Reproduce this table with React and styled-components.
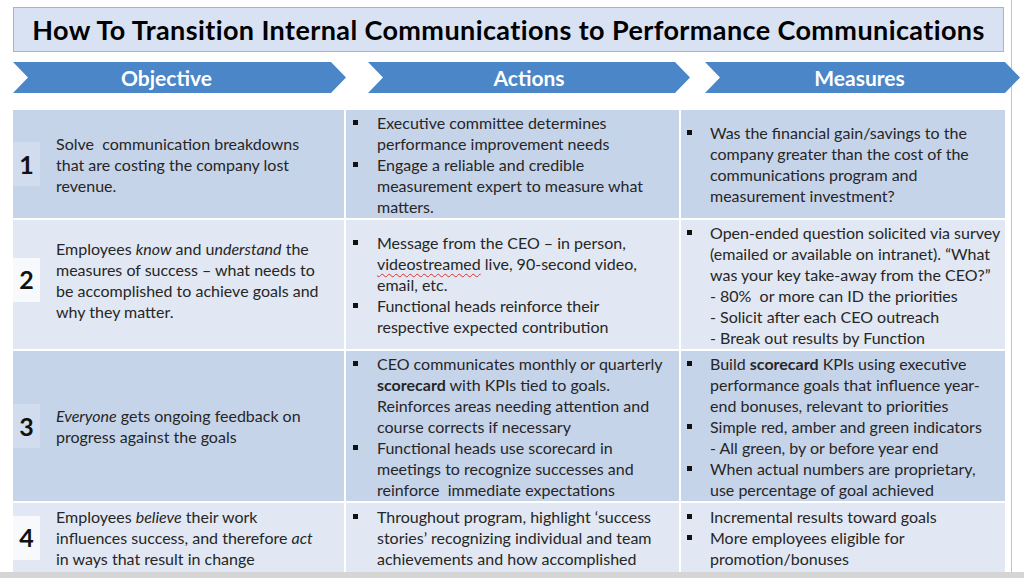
import React from 'react'
import styled, { createGlobalStyle } from 'styled-components'

const GlobalStyle = createGlobalStyle`
  html, body {
    margin: 0;
    padding: 0;
    background: #fff;
  }
  body {
    font-family: Lato, 'Open Sans', sans-serif;
    color: #262626;
  }
`

const Page = styled.div`
  width: 1024px;
  height: 578px;
  box-sizing: border-box;
  border-bottom: 6px solid #d5d5d5;
  overflow: hidden;
`

const Slide = styled.div`
  width: 1012px;
  height: 100%;
  box-sizing: border-box;
  border-right: 1px solid #c4c4c4;
  padding: 7px 0 0 13px;
`

const TitleBox = styled.div`
  width: 991px;
  height: 45px;
  box-sizing: border-box;
  background: #d9e2f3;
  border: 1px solid #9fb4d8;
  display: flex;
  align-items: center;
  justify-content: center;
  h1 {
    margin: 0;
    font-size: 27px;
    font-weight: 700;
    color: #000;
    letter-spacing: 0.4px;
    white-space: nowrap;
  }
`

const ChevronRow = styled.div`
  display: flex;
  margin-top: 10px;
  height: 31px;
`

const Chevron = styled.div`
  flex: 0 0 ${p => p.width}px;
  margin-left: ${p => p.offset || 0}px;
  background: #4a86c8;
  clip-path: polygon(0 0, calc(100% - 15px) 0, 100% 50%, calc(100% - 15px) 100%, 0 100%, 15px 50%);
  display: flex;
  align-items: center;
  justify-content: center;
  padding-right: ${p => p.shift || 0}px;
  box-sizing: border-box;
  color: #fff;
  font-weight: 700;
  font-size: 21px;
`

const Table = styled.div`
  margin-top: 17px;
  display: grid;
  grid-template-columns: 331px 333px 324px;
  grid-template-rows: 108px 129px 150px 69px;
  gap: 2px;
  width: 992px;
`

const Cell = styled.div`
  background: ${p => (p.dark ? '#c6d4ea' : '#e1e8f3')};
  display: flex;
  align-items: center;
  font-size: 16px;
  line-height: 21px;
  white-space: pre;
  box-sizing: border-box;
  padding-left: ${p => p.pad || 0}px;
  padding-bottom: ${p => p.lift || 0}px;
`

const NumBox = styled.div`
  flex: 0 0 27px;
  height: 44px;
  background: ${p => (p.dark ? '#d1dcef' : '#f7f9fc')};
  display: flex;
  align-items: center;
  justify-content: center;
  font-size: 25px;
  font-weight: 700;
  color: #111;
  margin-right: 16px;
`

const Objective = styled.div`
  color: #262626;
`

const List = styled.ul`
  margin: 0;
  padding: 0;
  list-style: none;
`

const Item = styled.li`
  position: relative;
  padding-left: ${p => p.indent}px;
  &::before {
    content: '';
    position: absolute;
    left: 0;
    top: 8px;
    width: 5px;
    height: 5px;
    background: #111;
  }
`

const Typo = styled.span`
  text-decoration: underline wavy #e0302a;
  text-decoration-thickness: 1px;
  text-underline-offset: 3px;
`

const rows = [
  {
    dark: true,
    objective: <>Solve  communication breakdowns<br />that are costing the company lost<br />revenue.</>,
    actions: [
      <>Executive committee determines<br />performance improvement needs</>,
      <>Engage a reliable and credible<br />measurement expert to measure what<br />matters.</>,
    ],
    measures: [
      <>Was the financial gain/savings to the<br />company greater than the cost of the<br />communications program and<br />measurement investment?</>,
    ],
  },
  {
    dark: false,
    lift: 10,
    objective: (
      <>
        Employees <i>know</i> and u<i>nderstand</i> the<br />measures of success – what needs to<br />be accomplished to achieve goals and<br />why they matter.
      </>
    ),
    actions: [
      <>Message from the CEO – in person,<br /><Typo>videostreamed</Typo> live, 90-second video,<br />email, etc.</>,
      <>Functional heads reinforce their<br />respective expected contribution</>,
    ],
    measures: [
      <>Open-ended question solicited via survey<br />(emailed or available on intranet). “What<br />was your key take-away from the CEO?”<br />- 80%  or more can ID the priorities<br />- Solicit after each CEO outreach<br />- Break out results by Function</>,
    ],
  },
  {
    dark: true,
    objective: <><i>Everyone</i> gets ongoing feedback on<br />progress against the goals</>,
    actions: [
      <>CEO communicates monthly or quarterly<br /><b>scorecard</b> with KPIs tied to goals.<br />Reinforces areas needing attention and<br />course corrects if necessary</>,
      <>Functional heads use scorecard in<br />meetings to recognize successes and<br />reinforce  immediate expectations</>,
    ],
    measures: [
      <>Build <b>scorecard</b> KPIs using executive<br />performance goals that influence year-<br />end bonuses, relevant to priorities</>,
      <>Simple red, amber and green indicators<br />- All green, by or before year end</>,
      <>When actual numbers are proprietary,<br />use percentage of goal achieved</>,
    ],
  },
  {
    dark: false,
    objective: <>Employees <i>believe</i> their work<br />influences success, and therefore <i>act</i><br />in ways that result in change</>,
    actions: [
      <>Throughout program, highlight ‘success<br />stories’ recognizing individual and team<br />achievements and how accomplished</>,
    ],
    measures: [
      <>Incremental results toward goals</>,
      <>More employees eligible for<br />promotion/bonuses</>,
    ],
  },
]

export default function App() {
  return (
    <Page>
      <GlobalStyle />
      <Slide>
        <TitleBox>
          <h1>How To Transition Internal Communications to Performance Communications</h1>
        </TitleBox>
        <ChevronRow>
          <Chevron width={333} shift={26}>Objective</Chevron>
          <Chevron width={322} offset={22}>Actions</Chevron>
          <Chevron width={315} offset={15} shift={6}>Measures</Chevron>
        </ChevronRow>
        <Table>
          {rows.map((row, i) => (
            <React.Fragment key={i}>
              <Cell dark={row.dark} lift={row.lift}>
                <NumBox dark={row.dark}>{i + 1}</NumBox>
                <Objective>{row.objective}</Objective>
              </Cell>
              <Cell dark={row.dark} pad={7}>
                <List>
                  {row.actions.map((a, j) => (
                    <Item key={j} indent={24}>{a}</Item>
                  ))}
                </List>
              </Cell>
              <Cell dark={row.dark} pad={6}>
                <List>
                  {row.measures.map((m, j) => (
                    <Item key={j} indent={23}>{m}</Item>
                  ))}
                </List>
              </Cell>
            </React.Fragment>
          ))}
        </Table>
      </Slide>
    </Page>
  )
}
